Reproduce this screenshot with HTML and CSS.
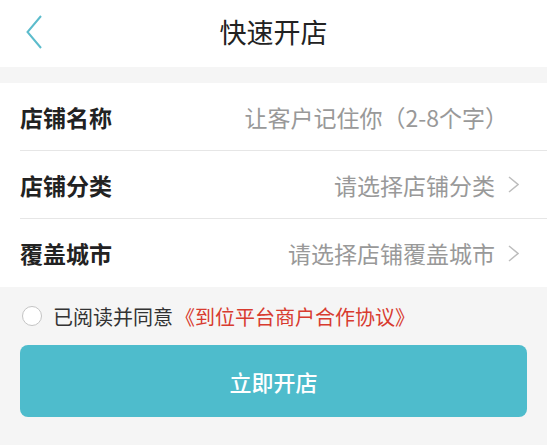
FILE: index.html
```html
<!DOCTYPE html>
<html lang="zh-CN">
<head>
<meta charset="utf-8">
<title>快速开店</title>
<link rel="stylesheet" href="styles.css">
</head>
<body>
<header class="topbar">
  <div class="back">
    <svg width="16" height="34" viewBox="0 0 16 34"><path d="M15 1 L1.5 17 L15 33" fill="none" stroke="#5cbccc" stroke-width="2"/></svg>
  </div>
  <h1 class="title">快速开店</h1>
  <div class="spacer"></div>
</header>
<section class="form">
  <div class="row">
    <span class="label">店铺名称</span>
    <span class="value plain">让客户记住你（2-8个字）</span>
    <span class="arrow hidden"></span>
  </div>
  <div class="row">
    <span class="label">店铺分类</span>
    <span class="value">请选择店铺分类</span>
    <svg class="arrow" width="11" height="17" viewBox="0 0 11 17"><path d="M1 1 L10 8.5 L1 16" fill="none" stroke="#bdbdbd" stroke-width="1.5"/></svg>
  </div>
  <div class="row">
    <span class="label">覆盖城市</span>
    <span class="value">请选择店铺覆盖城市</span>
    <svg class="arrow" width="11" height="17" viewBox="0 0 11 17"><path d="M1 1 L10 8.5 L1 16" fill="none" stroke="#bdbdbd" stroke-width="1.5"/></svg>
  </div>
</section>
<div class="agree">
  <span class="radio"></span>
  <span class="agree-text">已阅读并同意<span class="link">《到位平台商户合作协议》</span></span>
</div>
<button class="submit">立即开店</button>
</body>
</html>
```

FILE: styles.css
```css
* { box-sizing: border-box; }
html, body {
  margin: 0;
  padding: 0;
  background: #f5f5f5;
  font-family: "Noto Sans CJK SC", "Noto Sans", sans-serif;
  width: 547px;
  height: 445px;
  overflow: hidden;
}
.topbar {
  height: 67px;
  background: #fff;
  display: grid;
  grid-template-columns: 80px 1fr 80px;
  align-items: center;
}
.back {
  padding-left: 26px;
  padding-bottom: 4px;
  display: flex;
  align-items: center;
}
.title {
  margin: 0;
  text-align: center;
  font-size: 27px;
  font-weight: 400;
  color: #222;
  line-height: 1;
  padding-bottom: 4px;
}
.form {
  margin-top: 16px;
  background: #fff;
  padding-left: 20px;
}
.row {
  height: 67px;
  display: flex;
  align-items: center;
  padding-right: 28px;
  border-bottom: 1px solid #e6e6e6;
  box-sizing: content-box;
}
.row:last-child { border-bottom: none; height: 68px; }
.label {
  font-size: 23px;
  font-weight: 700;
  color: #222;
  flex: 0 0 auto;
}
.value {
  flex: 1;
  text-align: right;
  font-size: 23px;
  color: #999;
  margin-right: 13px;
}
.value.plain { margin-right: 0; }
.arrow {
  width: 11px;
  height: 17px;
  flex: 0 0 11px;
  display: block;
}
.arrow.hidden { visibility: hidden; }
.agree {
  height: 58px;
  display: flex;
  align-items: center;
  padding-left: 22px;
}
.radio {
  width: 20px;
  height: 20px;
  border: 1px solid #c4c4c4;
  border-radius: 50%;
  background: #fff;
  margin-right: 11px;
  flex: 0 0 20px;
}
.agree-text {
  font-size: 20px;
  color: #333;
}
.link { color: #d83b2f; margin-left: 2px; }
.submit {
  display: flex;
  align-items: center;
  justify-content: center;
  margin: 0 20px;
  width: 507px;
  height: 72px;
  border: none;
  border-radius: 8px;
  background: #4ebccc;
  color: #fff;
  font-family: "Noto Sans CJK SC", "Noto Sans", sans-serif;
  font-size: 22px;
  font-weight: 500;
  padding: 0;
}
```
